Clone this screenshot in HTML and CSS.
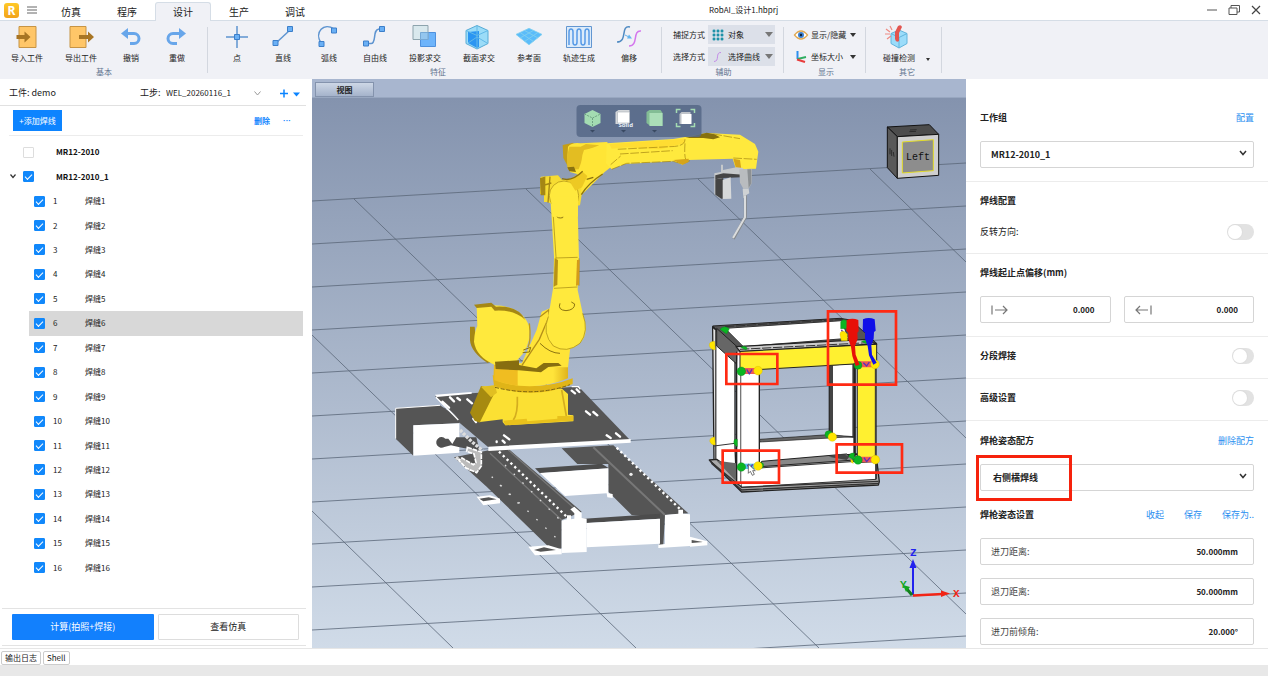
FILE: index.html
```html
<!DOCTYPE html>
<html lang="zh-CN">
<head>
<meta charset="utf-8">
<meta name="viewport" content="width=device-width, initial-scale=1">
<title>RobAI_设计1.hbprj</title>
<link rel="stylesheet" href="styles.css">
</head>
<body>
<div class="app">
  <header class="titlebar">
    <div class="brand">
      <span class="logo">R</span>
      <button class="plain menu" aria-label="菜单"><svg width="10" height="8" viewBox="0 0 10 8"><path d="M0 1h10M0 4h10M0 7h10" stroke="#666" fill="none"/></svg></button>
    </div>
    <nav class="tabs">
      <button class="tab">仿真</button>
      <button class="tab">程序</button>
      <button class="tab active">设计</button>
      <button class="tab">生产</button>
      <button class="tab">调试</button>
    </nav>
    <h1 class="doc-title">RobAI_设计1.hbprj</h1>
    <div class="window-buttons">
      <button class="plain" aria-label="最小化"><svg width="12" height="12" viewBox="0 0 12 12"><path d="M1 6h10" stroke="#555" fill="none"/></svg></button>
      <button class="plain" aria-label="还原"><svg width="12" height="12" viewBox="0 0 12 12"><path d="M1 4h8v6.500H1zM3 4V1.500h8.500V8H9" stroke="#555" fill="none"/></svg></button>
      <button class="plain" aria-label="关闭"><svg width="12" height="12" viewBox="0 0 12 12"><path d="M2 2l8 8M10 2l-8 8" stroke="#444" stroke-width="1.200" fill="none"/></svg></button>
    </div>
  </header>

  <div class="ribbon">
    <section class="group group-basic">
      <div class="tools">
        <button class="tool wide"><svg viewBox="0 0 26 24"><path d="M5 1.500h17v21H5z" fill="#ffc668" stroke="#c79445"/><path d="M2.500 10h8V6.500l6 5.500-6 5.500V14h-8z" fill="#a87524"/></svg>导入工件</button>
        <button class="tool wide"><svg viewBox="0 0 26 24"><path d="M2 1.500h16v21H2z" fill="#ffc668" stroke="#c79445"/><path d="M11 10h9V6.500l6 5.500-6 5.500V14h-9z" fill="#a87524"/></svg>导出工件</button>
        <button class="tool"><svg viewBox="0 0 26 24"><path d="M5 8.500h11a5 5 0 0 1 0 10h-4" fill="none" stroke="#68a6ea" stroke-width="3"/><path d="M3 8.500l7-5.500v11z" fill="#68a6ea"/></svg>撤销</button>
        <button class="tool"><svg viewBox="0 0 26 24"><path d="M19 8.500H9a5 5 0 0 0 0 10h4" fill="none" stroke="#68a6ea" stroke-width="3"/><path d="M22 8.500l-7-5.500v11z" fill="#68a6ea"/></svg>重做</button>
      </div>
      <h2>基本</h2>
    </section>
    <section class="group group-feature">
      <div class="tools">
        <button class="tool"><svg viewBox="0 0 26 24"><path d="M2 12h22M13 1v22" stroke="#5e94d0" stroke-width="1.500"/><path d="M10.500 9.500h5v5h-5z" fill="#6ab0f5" stroke="#3c7fca"/></svg>点</button>
        <button class="tool"><svg viewBox="0 0 26 24"><path d="M6 18L20 5" stroke="#5e94d0" stroke-width="1.500"/><path d="M3 15.500h5v5H3zM17.500 1.500h5v5h-5z" fill="#6ab0f5" stroke="#3c7fca"/></svg>直线</button>
        <button class="tool"><svg viewBox="0 0 26 24"><path d="M5 18C-2 7 8-3 18 4" fill="none" stroke="#5e94d0" stroke-width="1.500"/><path d="M3 16.500h5v5H3zM15.500 3h5v5h-5z" fill="#6ab0f5" stroke="#3c7fca"/></svg>弧线</button>
        <button class="tool"><svg viewBox="0 0 26 24"><path d="M5 18.500h4c6 0 1-14 8-14.500h4" fill="none" stroke="#5e94d0" stroke-width="1.500"/><path d="M1.500 16h5v5h-5zM17.500 1.500h5v5h-5z" fill="#6ab0f5" stroke="#3c7fca"/></svg>自由线</button>
        <button class="tool wide"><svg viewBox="0 0 26 24"><path d="M8.500 7.500h15v14h-15z" fill="#6db4fb" stroke="#4f91dd"/><path d="M1 .500h15v14H1z" fill="#d6e7ec" fill-opacity=".9" stroke="#8da3ad"/><path d="M8.500 7.500H16v7H8.500z" fill="#94c6ee" stroke="#76a9d6"/></svg>投影求交</button>
        <button class="tool wide"><svg viewBox="0 0 26 24"><path d="M11 .500l11 5v13l-11 5.500-11-5.500v-13z" fill="#9bdcf8" stroke="#57acd6"/><path d="M2 7l11-1v16l-2 1-9-5z" fill="#2a95f2"/><path d="M0 5.500l11 5 11-5M11 10v14M11 1v9M2 18l9-6 10 6" fill="none" stroke="#62b9e8"/></svg>截面求交</button>
        <button class="tool"><svg viewBox="0 0 30 24"><path d="M15 2l15 7-15 12L0 9z" fill="#5bbcfa"/><path d="M15 2l15 7-15 12L0 9zM10 4.500l15 8.500M5 7l15 10M20 4.500L5 13M25 7l-15 10" fill="none" stroke="#82d0ef"/></svg>参考面</button>
        <button class="tool wide"><svg viewBox="0 0 26 24"><path d="M.500 1.500h25v21H.500z" fill="#dcebfa" stroke="#6296d1"/><path d="M3 20V7c0-4 4-4 4 0v10c0 4 4 4 4 0V7c0-4 4-4 4 0v10c0 4 4 4 4 0V7c0-4 4-4 4 0v13" fill="none" stroke="#579be7" stroke-width="1.500"/></svg>轨迹生成</button>
        <button class="tool"><svg viewBox="0 0 26 24"><path d="M14 2C4 0 12 17 1 17" fill="none" stroke="#4f8ac2" stroke-width="1.500"/><path d="M25 6c-9-1-2 15-12 15" fill="none" stroke="#d477ed" stroke-width="1.500"/><path d="M9 10l4 2" stroke="#64b4ee"/><path d="M16 13.500l-5 0 2-4z" fill="#64b4ee"/></svg>偏移</button>
      </div>
      <h2>特征</h2>
    </section>
    <section class="group group-assist">
      <div class="fields">
        <div class="field"><label for="snap">捕捉方式</label><div class="combo"><svg width="12" height="12" viewBox="0 0 12 12"><path d="M0 2h12M0 6h12M0 10h12M2 0v12M6 0v12M10 0v12" stroke="#7fc0cd" stroke-width=".8"/><path d="M.800 2h2.400M4.800 2h2.400M8.800 2h2.400M.800 6h2.400M4.800 6h2.400M8.800 6h2.400M.800 10h2.400M4.800 10h2.400M8.800 10h2.400" stroke="#1f91a8" stroke-width="2.400"/></svg><select id="snap"><option>对象</option></select><i class="caret gray"></i></div></div>
        <div class="field"><label for="pick">选择方式</label><div class="combo"><svg width="12" height="12" viewBox="0 0 12 12"><path d="M9 1.500C3 1 8 10.500 2 10.500" stroke="#c48be8" fill="none"/></svg><select id="pick"><option>选择曲线</option></select><i class="caret gray"></i></div></div>
      </div>
      <h2>辅助</h2>
    </section>
    <section class="group group-display">
      <div class="fields">
        <button class="line-tool"><svg width="14" height="12" viewBox="0 0 14 12"><path d="M.500 6Q7-2 13.500 6 7 14 .500 6z" fill="#fff" stroke="#e0a850" stroke-width="1.300"/><circle cx="7" cy="6" r="3" fill="#3b7fd0"/><circle cx="7" cy="6" r="1.200" fill="#123"/></svg>显示/隐藏<i class="caret"></i></button>
        <button class="line-tool"><svg width="14" height="12" viewBox="0 0 14 12"><path d="M3.500 0v8" stroke="#2c8fee" stroke-width="2"/><path d="M3.500 8L12 6" stroke="#2fae62" stroke-width="1.800"/><path d="M3 8.500l8 2.500" stroke="#e83c3c" stroke-width="2"/></svg>坐标大小<i class="caret"></i></button>
      </div>
      <h2>显示</h2>
    </section>
    <section class="group group-other">
      <div class="tools">
        <button class="tool wide"><svg viewBox="0 0 26 24"><path d="M13 5l8 3.500v10L13 23l-8-4.500v-10z" fill="#9bdcfa" stroke="#61b4dc"/><path d="M5 8.500l8 4 8-4M13 12.500V23" fill="none" stroke="#61b4dc"/><path d="M12 1q3-2 4 1l-3 6 0 8q-3 2-4-2l0-7z" fill="#e25550"/><path d="M0 4l4 3M4 1l2 4M-1 9h5M1 14l4-3" stroke="#ee8b83" stroke-width="1.200"/></svg>碰撞检测</button>
        <button class="plain more" aria-label="更多"><i class="caret small"></i></button>
      </div>
      <h2>其它</h2>
    </section>
  </div>

  <main class="workspace">
    <aside class="left">
      <div class="job">
        <span class="piece">工件: demo</span>
        <label for="step">工步:</label>
        <select id="step"><option>WEL_20260116_1</option></select>
        <svg class="thin-chev" width="7" height="5" viewBox="0 0 7 5"><path d="M.500 .500l3 3.500 3-3.500" fill="none" stroke="#999"/></svg>
        <button class="plain plus" aria-label="新增工步"><svg width="20" height="9" viewBox="0 0 20 9"><path d="M0 4.500h8M4 .500v8" stroke="#0b84ff" stroke-width="1.500"/><path d="M13 3.500h7l-3.500 4z" fill="#0b84ff"/></svg></button>
      </div>
      <div class="actions">
        <button class="add">+添加焊线</button>
        <button class="plain del">删除</button>
        <button class="plain dots">···</button>
      </div>
      <ul class="tree">
        <li class="parent"><label><input type="checkbox"><span>MR12-2010</span></label></li>
        <li class="parent"><svg class="fold" width="6" height="5" viewBox="0 0 6 5"><path d="M.500 .500L3 3.500 5.500 .500" fill="none" stroke="#333" stroke-width="1.200"/></svg><label><input type="checkbox" checked><span>MR12-2010_1</span></label></li>
        <li><label><input type="checkbox" checked><span class="no">1</span><span>焊缝1</span></label></li>
        <li><label><input type="checkbox" checked><span class="no">2</span><span>焊缝2</span></label></li>
        <li><label><input type="checkbox" checked><span class="no">3</span><span>焊缝3</span></label></li>
        <li><label><input type="checkbox" checked><span class="no">4</span><span>焊缝4</span></label></li>
        <li><label><input type="checkbox" checked><span class="no">5</span><span>焊缝5</span></label></li>
        <li class="selected"><label><input type="checkbox" checked><span class="no">6</span><span>焊缝6</span></label></li>
        <li><label><input type="checkbox" checked><span class="no">7</span><span>焊缝7</span></label></li>
        <li><label><input type="checkbox" checked><span class="no">8</span><span>焊缝8</span></label></li>
        <li><label><input type="checkbox" checked><span class="no">9</span><span>焊缝9</span></label></li>
        <li><label><input type="checkbox" checked><span class="no">10</span><span>焊缝10</span></label></li>
        <li><label><input type="checkbox" checked><span class="no">11</span><span>焊缝11</span></label></li>
        <li><label><input type="checkbox" checked><span class="no">12</span><span>焊缝12</span></label></li>
        <li><label><input type="checkbox" checked><span class="no">13</span><span>焊缝13</span></label></li>
        <li><label><input type="checkbox" checked><span class="no">14</span><span>焊缝14</span></label></li>
        <li><label><input type="checkbox" checked><span class="no">15</span><span>焊缝15</span></label></li>
        <li><label><input type="checkbox" checked><span class="no">16</span><span>焊缝16</span></label></li>
      </ul>
      <div class="run">
        <button class="primary">计算(拍照+焊接)</button>
        <button class="secondary">查看仿真</button>
      </div>
    </aside>

    <section class="view">
      <div class="view-tabs"><button class="view-tab">视图</button></div>
      <div class="stage">
        <svg class="scene" viewBox="312 98 654 550" preserveAspectRatio="xMidYMid slice" role="img" aria-label="机器人焊接场景">
          <defs>
            <linearGradient id="sky" x1="0" y1="0" x2="0" y2="1"><stop offset="0" stop-color="#8493ae"/><stop offset="1" stop-color="#d0dbe8"/></linearGradient>
            <linearGradient id="gold" x1="0" y1="0" x2="1" y2="0"><stop offset="0" stop-color="#e9b91c"/><stop offset=".3" stop-color="#ffe43a"/><stop offset=".8" stop-color="#ffe43a"/><stop offset="1" stop-color="#dfb31c"/></linearGradient>
          </defs>
          <rect x="312" y="98" width="654" height="550" fill="url(#sky)"/>
          <path d="M312 201L966 163M312 244L966 206M312 287L966 249M312 330L966 292M312 373L966 335M312 416L966 378M312 459L966 421M312 502L966 464M312 544L966 507M312 587L966 550M312 630L966 593M660 654L966 636M312 511L453 648M312 335L636 648M354 199L819 648M526 189L966 614M698 179L966 438M870 169L966 262" fill="none" stroke="#5b6779" stroke-width=".8"/>

          <g transform="translate(380 370) scale(.33333)">
            <path d="M222 262L330 240 385 236 605 425 545 450 545 535 515 542 500 525 320 350z" fill="#555"/>
            <path d="M330 250L545 450M385 240l215 190" stroke="#777" stroke-width="4"/>
            <path d="M545 235L700 226 925 430 855 435 850 525 838 525 838 440 755 435 685 365 685 282 592 282z" fill="#555"/>
            <path d="M640 232L855 435" stroke="#777" stroke-width="6"/>
            <path d="M465 295L665 281 687 295 480 310z" fill="#4c4c4c"/>
            <path d="M480 309L685 295 685 370 698 372 698 384 682 382 680 370 555 378z" fill="#fff"/>
            <path d="M600 447L840 431 840 446 620 459z" fill="#4c4c4c"/>
            <path d="M620 459L840 446 840 521 620 532z" fill="#fff"/>
            <path d="M445 530l60-4 40 12v15l-80 3zM930 500l52 14v12l-52 4zM290 380l40-4 30 10v14l-50 6z" fill="#fff"/>
            <path d="M462 540l30-8 36 8-46 5zM935 510l34 6-34 3zM298 386l28-4 24 6-40 6z" fill="#555"/>
            <path d="M545 452l16-4v-12h12v12l10-2v-16l-12-12 12-8 22 20v14l15 2v100l-75 3zM855 435l40-4v-12h14v12l21 2v95l-95 6v-10l20-2z" fill="#fff"/>
            <path d="M357 245L560 440M710 233L905 422" stroke="#fff" stroke-width="7" stroke-dasharray="7 9"/>
            <path d="M335 320l200 190M360 345l60 60M375 285l170 170" stroke="#ddd" stroke-width="4" stroke-dasharray="5 32"/>
            <circle cx="753" cy="313" r="5" fill="#eee"/>
            <path d="M47 115L180 106 238 145 238 160 100 166 100 257 47 206z" fill="#555"/>
            <path d="M100 166L238 160V248L100 257z" fill="#fff"/>
            <path d="M47 206V115L180 106" fill="none" stroke="#fff" stroke-width="3"/>
            <path d="M205 206l12 16 12-20 60 0 10 42-60-12-26-6-20 5a16 16 0 1 1 3-25z" fill="#505050"/>
            <path d="M165 78L240 72 590 50 602 56 750 210 325 232 235 155 235 145z" fill="#555"/>
            <path d="M325 230L752 207V218L325 243zM165 74l110-8v5l-105 10z" fill="#fff"/>
            <path d="M168 82l40 40 27 28M575 50l20 0 6 8" fill="none" stroke="#fff" stroke-width="4"/>
            <path d="M240 180l34 34 34 28M228 262l46 38" fill="none" stroke="#ddd" stroke-width="10" stroke-dasharray="9 4"/>
            <path d="M262 232l42 14 0 42-14 20-32-14-22-24 10-6 34 20 8-6-6-26-22-8z" fill="#bbb" stroke="#fff" stroke-width="5" stroke-dasharray="14 3"/>
            <path d="M187 95l20 18M210 82l12 12M262 88l14 12M618 124l12 10M640 126l12 10M372 196l16 12M350 214l0 2M368 212l6 6M680 196l12 8M708 190l12 10M575 62l10 8M590 58l8 8M232 84l8 6M280 146l8 10" stroke="#fff" stroke-width="7" stroke-linecap="round"/>
            <path d="M270 128L303 48 345 56 352 74 300 158 284 152z" fill="#a68a10"/>
            <path d="M305 50l45-4 196 10 18 16 0 62 16 2v18l-204 12-8-10v-8l-68 8 45-90z" fill="#fbe033"/>
            <path d="M303 50l42-4 6 22-18 14z" fill="#e1bf22"/>
            <path d="M412 80q2 50-12 70M545 60l14 78" fill="none" stroke="#d4ad1f" stroke-width="5"/>
            <path d="M370 152l70-6 2 8 90-8 0-8 48 0v14l-204 14z" fill="#e8c11c"/>
          </g>

          <g transform="translate(440 130) scale(.33333)">
            <path d="M158 735Q270 795 398 745V762Q280 812 162 768z" fill="#e0b418"/>
            <path d="M162 700H384V745Q280 790 160 750z" fill="url(#gold)"/>
            <path d="M165 705l68 10v52q-40-5-68-18z" fill="#f0bd21"/>
            <path d="M165 772q120 30 225-8" fill="none" stroke="#7d6510" stroke-width="3" stroke-dasharray="12 5"/>
            <path d="M90 590l14 0 4 40q10 40 40 62l-4 8q-52-34-54-70z" fill="#a58714"/>
            <path d="M110 530Q240 510 268 590 275 650 232 690L235 712 165 705Q108 680 102 635 104 600 112 588z" fill="#ffe93d"/>
            <path d="M102 524l52-6 14 12q66-4 88 40-34-32-92-28l-10-12-44 4z" fill="#a58714"/>
            <path d="M268 580q6 50-4 72" fill="none" stroke="#c09a18" stroke-width="4"/>
            <path d="M290 600L305 545 330 535 345 560 390 660 384 712 240 712z" fill="#ffe438"/>
            <path d="M300 560l26-20 2 18-30 70-52 78" fill="none" stroke="#b5901a" stroke-width="4"/>
            <path d="M165 695l72-4 0 14 52 10 22-16 44 0 10 8-40 4-22 16-66-6-70-4z" fill="#876e10"/>
            <path d="M330 190Q335 260 342 380L340 470 325 560Q300 620 340 645 380 675 420 640 450 610 428 550L413 480 417 385 412 200z" fill="#ffe93d"/>
            <path d="M340 260L348 380 342 470M417 385v82M413 382l-65 2M342 475l70-4M325 560q-20 50 15 88 40 24 80-8 28-36 8-90" fill="none" stroke="#a0840f" stroke-width="2"/>
            <path d="M411 390l8 0-2 75-9 2z" fill="#d49b19"/>
            <path d="M344 385l10 5-2 75-10 4z" fill="#b79215"/>
            <path d="M360 520q-8 20 18 22 26-2 26-20l-10-6M348 255q4 12 20 8l4-14M300 640q30 30 60 30M250 660l22-8-4 14-20 2" fill="none" stroke="#8b7210" stroke-width="3"/>
            <path d="M302 140l52-4 12 14 30-4 24-20 10 40-10 60-50 8-48-18-10 0 0-24-12 0z" fill="#f6dc32"/>
            <path d="M302 146l12-4v52h-10zM330 140l-6 78M314 165l20-6" fill="#a58714" stroke="#a58714" stroke-width="4"/>
            <circle cx="372" cy="197" r="44" fill="#ffe93d" stroke="#a58714" stroke-width="2"/>
            <path d="M332 200h82v60h-75z" fill="#ffe93d"/>
            <path d="M368 45L400 38 405 60 400 95 385 112 370 84z" fill="#c49e17"/>
            <path d="M384 50q12-14 38-10l80-4 10 76-18 14-30 30-40 40 0-60-34-10-8-40z" fill="#ffe536"/>
            <path d="M388 50l34 0 16-8 40 4-28 10-18 18-16 44-32 2q-8-30 4-70z" fill="#e3bd22"/>
            <path d="M432 60q70-20 68 40 0 20-22 34l-34 14-18-12q-6-48 6-76" fill="#ffe536"/>
            <path d="M362 146q30 10 64-22l16 14-16 34-20 10-16-26z" fill="#edc923"/>
            <path d="M366 146q30 10 62-22M424 194q20-34 64-62M440 148l20-6" fill="none" stroke="#8b7210" stroke-width="4"/>
            <path d="M500 40L700 27 740 20 800 9 900 14 945 42 955 65 948 116 888 118 878 86 745 90 728 104 700 94 555 102 515 118 498 100z" fill="#ffe93d"/>
            <path d="M508 42L640 33 736 26 734 40 660 58 560 52 515 56z" fill="#ffdd32"/>
            <path d="M736 24L800 8 822 12 840 22 820 28 790 24z" fill="#86700f"/>
            <path d="M735 28Q735 50 690 50L530 58M540 72L698 62M512 104l30-26M735 40q-4 60 10 50M820 12l80 14M880 84l70 4M515 118l45-18 140-6 28 8 22-10" fill="none" stroke="#a0810f" stroke-width="2" stroke-dasharray="26 5"/>
            <path d="M700 90l46-4 0 10-18 8zM880 86l20 4 4 27-15 1z" fill="#d6a41a"/>
            <path d="M382 112l20-2 6 16-20-2z" fill="#8b7210"/>
            <path d="M823 130l20-4 0-22 6 0 0 16 40-8 20 2 0 22-60 4 0 65-10 0-16-12z" fill="#c6c9cb"/>
            <path d="M826 136l24-6 60 4-4 8-60 2-20 4z" fill="#454545"/>
            <path d="M826 148l24-4 0 62-6 0-18-12z" fill="#444"/>
            <path d="M848 150l24-8 2 64-26 1z" fill="#d7d9da"/>
            <path d="M898 118l38-2-1 44-9 16-16 0-10-18z" fill="#b9bcbf"/>
            <path d="M922 118l12 0 0 42-8 14z" fill="#8c9093"/>
            <path d="M908 176l18 0 2 14-8 4-2 12-8-2z" fill="#cfd2d4"/>
            <path d="M916 196V262L880 326" fill="none" stroke="#85898c" stroke-width="9" stroke-linejoin="round"/>
            <path d="M915 196V262L879 324" fill="none" stroke="#dadcdd" stroke-width="6"/>
          </g>

          <g transform="translate(700 300) scale(.33333)" stroke-linejoin="round">
            <path d="M38 78L420 55 452 60 530 130 120 160z" fill="#555" stroke="#222" stroke-width="3"/>
            <path d="M75 85L425 62 445 115 130 140z" fill="#fff" stroke="#333" stroke-width="3"/>
            <path d="M38 80L105 150V440L108 520 42 480z" fill="#fff" stroke="#222" stroke-width="4"/>
            <path d="M47 90V478" stroke="#555" stroke-width="5"/>
            <path d="M50 85L120 148 108 190 50 138z" fill="#666" stroke="#222" stroke-width="3"/>
            <path d="M42 438L105 430M42 480L105 520" stroke="#333" stroke-width="3"/>
            <path d="M388 195L462 190V415L388 410z" fill="#fff" stroke="#222" stroke-width="4"/>
            <path d="M394 195V410M462 190V470" stroke="#444" stroke-width="10"/>
            <path d="M178 420L388 406 462 412V470L178 488z" fill="#fff" stroke="#333" stroke-width="3"/>
            <path d="M178 418L385 404 460 410 180 426z" fill="#666" stroke="#222" stroke-width="2"/>
            <path d="M28 480L50 478 110 520 185 488 470 462 530 478 538 545 535 555 125 576z" fill="#aaa" stroke="#222" stroke-width="4"/>
            <path d="M50 482L110 490 110 545z" fill="#666"/>
            <path d="M185 484L440 462 465 480 180 500z" fill="#888" stroke="#222" stroke-width="3"/>
            <path d="M120 508L528 480V538L124 562z" fill="#fff" stroke="#333" stroke-width="3"/>
            <path d="M30 484L125 562 536 544M34 490L125 570 536 550" fill="none" stroke="#333" stroke-width="4"/>
            <path d="M112 155L178 150V500L122 555 108 545z" fill="#fff"/>
            <path d="M110 155V545M178 200V490" stroke="#222" stroke-width="4"/>
            <path d="M122 160V550" stroke="#777" stroke-width="4"/>
            <path d="M528 190V538" stroke="#222" stroke-width="4"/>
            <path d="M120 152L530 132V188L120 212z" fill="#fff030" stroke="#222" stroke-width="3"/>
            <path d="M472 190H526V485L472 488z" fill="#fff030" stroke="#333" stroke-width="3"/>
            <path d="M464 190V470" stroke="#222" stroke-width="6"/>
            <path d="M108 140L500 118 530 132 120 154z" fill="#ccc" stroke="#222" stroke-width="4"/>
            <path d="M120 148L525 127M75 80L430 58" stroke="#333" stroke-width="3" stroke-dasharray="28 5"/>
            <path d="M126 204H172V222H126zM478 184H524V202H478zM478 470H524V487H478z" fill="#f05757"/>
            <path d="M130 491H172V507H130z" fill="#57c7ef"/>
            <path d="M140 208l8 14 8-14M490 188l10 10 8-12M492 473l8 12 10-12M142 495l8 10 8-12M424 90l10 12" fill="none" stroke="#5d34b6" stroke-width="4"/>
            <path d="M386 470l34-8 30 6-10 12z" fill="#444"/>
            <g fill="#0bb522" stroke="#087c18" stroke-width="1">
              <circle cx="124" cy="214" r="13"/><circle cx="474" cy="196" r="12"/><circle cx="124" cy="501" r="13"/><circle cx="474" cy="480" r="13"/><circle cx="386" cy="403" r="11"/>
              <path d="M60 88q12-14 28-2l-8 16zM422 66q8-12 20-2v22h-20zM122 142q12-8 20 2l-4 6zM104 418l8 0v22q-16-8-8-22zM484 124l16-4v12zM182 486q14 4 6 18h-8zM446 470q4-14 18-10l-2 20z"/>
            </g>
            <g fill="#ffe500" stroke="#c7ad00" stroke-width="1">
              <circle cx="174" cy="212" r="13"/><circle cx="525" cy="193" r="13"/><circle cx="174" cy="498" r="13"/><circle cx="526" cy="479" r="13"/><circle cx="397" cy="411" r="13"/>
              <path d="M44 124q-18 0-16 13 4 14 18 12zM44 410q-18 4-14 16 6 12 16 8zM420 104q0-12 12-10l10 8v20h-18zM452 478q8 2 8 12-8 0-8-12z"/>
            </g>
            <path d="M440 60q17-8 35 0l1 34-4 4 1 18-8 22 2 26 12 30-12 4-10-30-4-28-8-22 0-20-6-6z" fill="#e70f08"/>
            <path d="M489 58q17-8 35 0l3 34-5 4-1 20-7 20 2 28 14 24-10 6-13-28-4-28-8-22 0-18-7-6z" fill="#1010e8"/>
            <path d="M145 492V520l6-6 6 12 6-3-5-11h8z" fill="#fff" stroke="#333" stroke-width="2"/>
            <g fill="none" stroke="#ff2a13" stroke-width="8" stroke-linejoin="miter">
              <path d="M79 162H232V252H79zM384 34H588V254H384zM68 452H237V548H68zM410 433H606V518H410z"/>
            </g>
          </g>

          <g transform="translate(650 0) scale(.33333)" stroke="#111" stroke-width="3" stroke-linejoin="round">
            <path d="M712 381L838 374 866 403 742 410z" fill="#4c4c4c"/>
            <path d="M712 381L742 410V535L712 503z" fill="#595959"/>
            <path d="M742 410L866 403V526L742 535z" fill="#cfcfcf"/>
            <path d="M757 426L850 419V512L757 519z" fill="#8d8d8d" stroke="#e3dc27"/>
            <path d="M780 390l20-1M778 395l20-1M720 445v18M725 450v18M730 456l2 14" stroke="#2c2c2c" fill="none"/>
          </g>
          <text class="cube-text" x="906" y="160">Left</text>
          <g>
            <path d="M913 595V566" stroke="#2222ee" stroke-width="2"/><path d="M909.500 568l3.500-9 3.500 9z" fill="#2222ee"/>
            <path d="M913 595.500L943 594" stroke="#f22516" stroke-width="2.500"/><path d="M941 590.500l9 3-9 3.500z" fill="#f22516"/>
            <path d="M912 595L906 588" stroke="#137e1d" stroke-width="3"/><path d="M903 585l7 2-4 5z" fill="#12a51f"/>
            <text class="axis z" x="910" y="556">Z</text><text class="axis x" x="953" y="597">X</text><text class="axis y" x="900" y="588">Y</text>
          </g>
        </svg>
        <div class="view-tools">
          <button class="plain" aria-label="视角"><svg width="20" height="26" viewBox="0 0 20 26"><path d="M10 2l8 4v9l-8 4-8-4V6z" fill="#a4dcb2"/><path d="M2 6l8 4 8-4M10 10v9" fill="none" stroke="#6fa283" stroke-dasharray="2 1"/><path d="M7.500 22h5L10 24.500z" fill="#394962"/></svg></button>
          <button class="plain" aria-label="Solid"><svg width="20" height="26" viewBox="0 0 20 26"><path d="M2 4l3-2h11v12l-3 2H2z" fill="#d5d8db"/><path d="M4 4h12v11H4z" fill="#fff" stroke="#aab0b7" stroke-width=".6"/><text class="solid" x="5" y="19">Solid</text><path d="M7.500 22h5L10 24.500z" fill="#394962"/></svg></button>
          <button class="plain" aria-label="显示模式"><svg width="20" height="26" viewBox="0 0 20 26"><path d="M2 4l3-2h11l2 3v13H6l-4-3z" fill="#83bd95"/><path d="M5 5h13v13H5z" fill="#abdeb8"/><path d="M7.500 22h5L10 24.500z" fill="#394962"/></svg></button>
          <button class="plain" aria-label="适应窗口"><svg width="20" height="26" viewBox="0 0 20 26"><path d="M1 5V1.500h4M15 1.500h4V5M19 15v3.500h-4M5 18.500H1V15" fill="none" stroke="#a4dcb2" stroke-width="1.500"/><path d="M4 6l2-2h9v9l-2 3H4z" fill="#bfc3c9"/><path d="M6 6h10v10H6z" fill="#fff"/></svg></button>
        </div>
      </div>
    </section>

    <aside class="right">
      <section class="panel first">
        <div class="head"><h3>工作组</h3><button class="plain link">配置</button></div>
        <div class="picker"><select aria-label="工作组"><option>MR12-2010_1</option></select><svg width="8" height="6" viewBox="0 0 8 6"><path d="M1 1l3 3.500L7 1" fill="none" stroke="#333" stroke-width="1.500"/></svg></div>
      </section>
      <section class="panel">
        <div class="head"><h3>焊线配置</h3></div>
        <div class="row"><label for="rev">反转方向:</label><input id="rev" class="switch long" type="checkbox" role="switch"></div>
      </section>
      <section class="panel">
        <div class="head"><h3>焊线起止点偏移(mm)</h3></div>
        <div class="pair">
          <label class="box"><svg width="18" height="10" viewBox="0 0 18 10"><path d="M1 .500v9M4 5h12M12 1l4 4-4 4" fill="none" stroke="#777" stroke-width="1.200"/></svg><input type="text" value="0.000" aria-label="起点偏移"></label>
          <label class="box"><svg width="18" height="10" viewBox="0 0 18 10"><path d="M16 .500v9M1 5h12M5 1L1 5l4 4" fill="none" stroke="#777" stroke-width="1.200"/></svg><input type="text" value="0.000" aria-label="终点偏移"></label>
        </div>
      </section>
      <section class="panel slim"><div class="row"><label class="strong" for="seg">分段焊接</label><input id="seg" class="switch" type="checkbox" role="switch"></div></section>
      <section class="panel slim"><div class="row"><label class="strong" for="adv">高级设置</label><input id="adv" class="switch" type="checkbox" role="switch"></div></section>
      <section class="panel last">
        <div class="head"><h3>焊枪姿态配方</h3><button class="plain link">删除配方</button></div>
        <div class="picker marked"><select aria-label="焊枪姿态配方"><option>右侧横焊线</option></select><svg width="8" height="6" viewBox="0 0 8 6"><path d="M1 1l3 3.500L7 1" fill="none" stroke="#333" stroke-width="1.500"/></svg></div>
        <div class="head second"><h3>焊枪姿态设置</h3><div class="links"><button class="plain link">收起</button><button class="plain link">保存</button><button class="plain link">保存为..</button></div></div>
        <div class="boxes">
          <label class="box"><span>进刀距离:</span><input type="text" value="50.000mm"></label>
          <label class="box"><span>退刀距离:</span><input type="text" value="50.000mm"></label>
          <label class="box"><span>进刀前倾角:</span><input type="text" value="20.000°"></label>
        </div>
      </section>
    </aside>
  </main>

  <footer class="status">
    <div class="status-tabs"><button>输出日志</button><button>Shell</button></div>
    <div class="status-bar"></div>
  </footer>
</div>
</body>
</html>
```
FILE: styles.css
```css
*, *::before, *::after { box-sizing: border-box; }
body { margin: 0; background: #fff; color: #222; font: 9px/14px "Noto Sans CJK SC", "Noto Sans", sans-serif; }
button, input, select { font: inherit; color: inherit; margin: 0; padding: 0; border: 0; background: none; border-radius: 0; }
select { appearance: none; outline: 0; }
h1, h2, h3, ul { margin: 0; padding: 0; font-size: inherit; }
svg { display: block; flex: none; overflow: visible; }
.plain { display: flex; align-items: center; }

.app { height: 100vh; display: flex; flex-direction: column; overflow: hidden; }

/* title bar */
.titlebar { height: 21px; flex: none; display: grid; grid-template-columns: 43px 1fr auto 1fr; border-bottom: 1px solid #d5dde6; }
.brand { display: flex; align-items: center; gap: 8px; padding-left: 4px; }
.logo { width: 15px; height: 15px; border-radius: 3px; background: linear-gradient(#ffc928, #f2a31b); color: #fff; font: bold 12px/15px "Noto Sans", sans-serif; text-align: center; }
.tabs { display: flex; align-items: flex-end; }
.tab { width: 56px; height: 18px; font-size: 10px; line-height: 16px; border: 1px solid transparent; border-bottom: 0; }
.tab.active { background: #f0f1f6; border-color: #d5dde6; border-radius: 3px 3px 0 0; height: 19px; margin-bottom: -1px; }
.doc-title { padding: 3px 0 0 176px; font-size: 8px; font-weight: 400; white-space: nowrap; }
.window-buttons { display: flex; justify-content: flex-end; gap: 10px; padding: 0 6px; }

/* ribbon */
.ribbon { flex: none; height: 58px; display: flex; background: #f0f1f6; font-size: 8px; line-height: 12px; }
.group { display: flex; flex-direction: column; justify-content: space-between; position: relative; padding: 4px 0 1px; }
.group::after { content: ""; position: absolute; right: 0; top: 6px; bottom: 6px; width: 1px; background: #d3d7df; }
.group h2 { font-weight: 400; color: #61738f; text-align: center; line-height: 12px; }
.group-basic { width: 208px; }
.group-feature { width: 454px; padding-left: 6px; }
.group-assist { width: 122px; padding-left: 11px; }
.group-display { width: 82px; padding-left: 10px; }
.group-other { width: 76px; padding-left: 6px; }
.tools { display: flex; }
.tool { width: 46px; display: flex; flex-direction: column; align-items: center; gap: 3px; line-height: 12px; white-space: nowrap; }
.tool.wide { width: 54px; }
.tool svg { height: 24px; width: 26px; }
.more { padding-top: 29px; width: 6px; }
.fields { display: flex; flex-direction: column; gap: 3px; }
.field { display: flex; align-items: center; gap: 3px; }
.combo { flex: 1; height: 19px; margin-right: 9px; display: flex; align-items: center; gap: 4px; padding: 0 2px 0 4px; background: #dce0e9; }
.combo select { flex: 1; min-width: 0; }
.caret { border: solid transparent; border-width: 4px 3px 0; border-top-color: #333; width: 6px; }
.caret.gray { border-top-color: #777; border-width: 5px 4px 0; width: 8px; }
.caret.small { border-width: 3px 2px 0; width: 4px; }
.line-tool { height: 19px; display: flex; align-items: center; gap: 3px; white-space: nowrap; }
.line-tool .caret { margin-left: auto; }
.group-display .fields { padding-right: 10px; }
.group-assist h2 { padding-right: 10px; }
.group-display h2 { padding-right: 8px; }

/* workspace */
.workspace { flex: 1; min-height: 0; display: grid; grid-template-columns: 312px minmax(0, 1fr) 302px; }
.left { display: flex; flex-direction: column; min-height: 0; padding-right: 6px; }
.job { display: flex; align-items: center; height: 27px; padding: 2px 6px 0 9px; border-bottom: 1px solid #e1e1e1; }
.piece { width: 131px; }
.job select { width: 88px; padding-left: 4px; font-size: 8px; }
.job label { width: 22px; }
.thin-chev { margin-left: 4px; }
.plus { margin-left: auto; }
.actions { display: flex; align-items: center; height: 30px; margin: 0 3px 0 9px; padding: 0 12px 0 4px; border-bottom: 1px solid #ececec; font-size: 8px; }
.add { width: 49px; height: 21px; background: #0d84ff; color: #fff; }
.del { margin-left: auto; color: #0d84ff; font-weight: 700; }
.dots { margin-left: 13px; color: #0d84ff; font-family: "Liberation Sans", sans-serif; font-weight: 700; }
.tree { flex: 1; min-height: 0; display: grid; grid-auto-rows: 1fr; padding: 4px 3px 28px 29px; list-style: none; font-size: 8px; line-height: 12px; }
.tree li { display: flex; align-items: center; padding-left: 5px; }
.tree label { display: flex; align-items: center; flex: 1; }
.tree .parent { margin-left: -29px; padding-left: 23px; font-weight: 700; color: #111; }
.tree .parent input { margin-right: 22px; }
.tree .fold { margin: 0 7px 0 -13px; }
.tree .selected { background: #d8d8d8; }
.tree input { appearance: none; width: 11px; height: 11px; border: 1px solid #ddd; border-radius: 1px; margin-right: 8px; flex: none; }
.tree input:checked { background: #1188fb; border-color: #1188fb; }
.tree input:checked::before { content: ""; display: block; width: 7px; height: 4px; margin: 2px 0 0 1px; border: solid #fff; border-width: 0 0 1px 1px; transform: rotate(-45deg); }
.no { width: 32px; }
.run { display: grid; grid-template-columns: 1fr 1fr; gap: 4px; margin: 0 0 2px 2px; padding: 5px 7px 5px 10px; border: solid #e3e3e3; border-width: 1px 0; }
.run button { height: 26px; border-radius: 1px; }
.primary { background: #1280fd; color: #fff; }
.run .secondary { border: 1px solid #ddd; }

.view { display: flex; flex-direction: column; min-width: 0; min-height: 0; }
.view-tabs { height: 19px; flex: none; background: #a8b6cf; padding: 3px 3px 0; border-bottom: 1px solid #98a7c0; }
.view-tab { width: 59px; height: 15px; display: block; font-size: 8px; line-height: 13px; font-weight: 700; border: 1px solid #8493ad; background: linear-gradient(#cdd7e6, #a5b3cb); }
.stage { flex: 1; min-height: 0; position: relative; }
.scene { width: 100%; height: 100%; overflow: hidden; }
.cube-text { font: 10px "Liberation Mono", monospace; fill: #111; }
.axis { font: bold 11px "Liberation Mono", monospace; }
.z { fill: #2222ee; }
.x { fill: #f22516; }
.y { fill: #12a51f; }
.solid { font: bold 6px "Noto Sans", sans-serif; fill: #e6edf5; }
.view-tools { position: absolute; top: 7px; left: 50%; transform: translateX(-50%); display: flex; gap: 11px; padding: 3px 6px; border-radius: 4px; background: rgba(87, 105, 136, .88); }

/* property panel */
.right { min-height: 0; overflow: hidden; }
.panel { padding: 12px 14px 13px; border-bottom: 1px solid #ececec; }
.panel.first { padding-top: 32px; }
.panel.slim { padding: 11px 14px 14px; }
.panel.last { padding-top: 13px; border: 0; }
.head { display: flex; justify-content: space-between; align-items: center; margin-bottom: 16px; }
.head.second { margin-top: 17px; }
.links { display: flex; gap: 20px; }
.link { color: #2a8ef0; white-space: nowrap; }
.row { display: flex; justify-content: space-between; align-items: center; height: 16px; }
.strong { font-weight: 700; }
.picker { position: relative; height: 27px; border: 1px solid #d5d5d5; border-radius: 2px; display: flex; align-items: center; padding-right: 6px; }
.picker select { flex: 1; align-self: stretch; padding-left: 10px; font-weight: 700; }
.picker svg { margin-bottom: 4px; }
.picker.marked select { padding-left: 12px; }
.marked::before { content: ""; position: absolute; left: -5px; top: -10px; width: 96px; height: 46px; border: 3px solid #f6220c; pointer-events: none; }
.pair { display: grid; grid-template-columns: 1fr 1fr; gap: 13px; }
.boxes { display: grid; gap: 13px; }
.box { display: flex; align-items: center; justify-content: space-between; height: 27px; min-width: 0; border: 1px solid #d5d5d5; border-radius: 2px; padding: 0 15px 0 10px; }
.box span { color: #444; }
.box input { width: 60px; min-width: 0; text-align: right; font-size: 8px; font-weight: 700; }
.switch { appearance: none; width: 21px; height: 16px; border-radius: 8px; background: #e2e2e2; }
.switch.long { width: 26px; }
.switch::before { content: ""; display: block; width: 14px; height: 14px; margin: 1px 0 0; border-radius: 50%; background: #fff; box-shadow: 0 0 0 1px #ddd; }

/* status */
.status { flex: none; }
.status-tabs { height: 17px; display: flex; align-items: center; gap: 2px; padding: 1px 1px 0; border-top: 1px solid #e6e6e6; }
.status-tabs button { height: 14px; padding: 0 3px; font-size: 8px; line-height: 12px; border: 1px solid #ccc; border-radius: 2px; }
.status-bar { height: 11px; background: #e8e8e8; }
```
